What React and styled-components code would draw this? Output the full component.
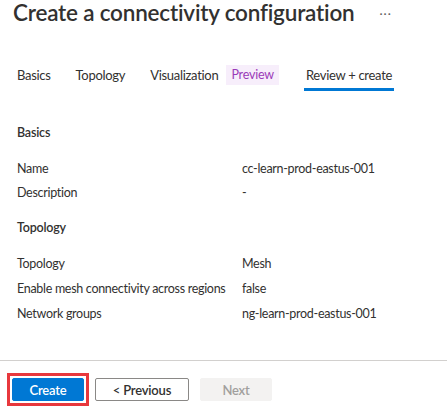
import React from "react";
import styled, { createGlobalStyle } from "styled-components";

const GlobalStyle = createGlobalStyle`
  body {
    margin: 0;
    background: #ffffff;
    font-family: "Segoe UI", Lato, sans-serif;
    color: #323130;
  }
`;

const basics = [
  { label: "Name", value: "cc-learn-prod-eastus-001" },
  { label: "Description", value: "-" },
];

const topology = [
  { label: "Topology", value: "Mesh" },
  { label: "Enable mesh connectivity across regions", value: "false" },
  { label: "Network groups", value: "ng-learn-prod-eastus-001" },
];

const tabs = [
  { name: "Basics" },
  { name: "Topology" },
  { name: "Visualization", badge: "Preview" },
  { name: "Review + create", active: true },
];

export default function App() {
  return (
    <Page>
      <GlobalStyle />
      <Header>
        <Title>Create a connectivity configuration</Title>
        <More>···</More>
      </Header>
      <TabBar>
        {tabs.map((t) => (
          <Tab key={t.name} $active={t.active}>
            {t.name}
            {t.badge && <Badge>{t.badge}</Badge>}
          </Tab>
        ))}
      </TabBar>
      <Content>
        <SectionTitle>Basics</SectionTitle>
        <Rows>
          {basics.map((r) => (
            <Row key={r.label}>
              <Label>{r.label}</Label>
              <Value>{r.value}</Value>
            </Row>
          ))}
        </Rows>
        <SectionTitle>Topology</SectionTitle>
        <Rows>
          {topology.map((r) => (
            <Row key={r.label} $tall>
              <Label>{r.label}</Label>
              <Value>{r.value}</Value>
            </Row>
          ))}
        </Rows>
      </Content>
      <Footer>
        <Highlight>
          <PrimaryButton>Create</PrimaryButton>
        </Highlight>
        <SecondaryButton>&lt; Previous</SecondaryButton>
        <DisabledButton>Next</DisabledButton>
      </Footer>
    </Page>
  );
}

const Page = styled.div`
  width: 447px;
  height: 418px;
  overflow: hidden;
  display: flex;
  flex-direction: column;
`;

const Header = styled.div`
  display: flex;
  align-items: center;
  padding-left: 13px;
  height: 26px;
`;

const Title = styled.h1`
  margin: 0;
  font-size: 22.5px;
  font-weight: 600;
  letter-spacing: -0.2px;
  line-height: 26px;
  color: #323130;
  white-space: nowrap;
`;

const More = styled.span`
  margin-left: 25px;
  font-size: 12px;
  color: #605e5c;
  letter-spacing: 1px;
`;

const TabBar = styled.div`
  display: flex;
  align-items: stretch;
  gap: 25px;
  margin-top: 37px;
  padding-left: 17px;
  height: 28px;
`;

const Tab = styled.div`
  display: flex;
  align-items: center;
  padding-bottom: 4px;
  font-size: 13px;
  letter-spacing: -0.3px;
  color: #323130;
  white-space: nowrap;
  position: relative;
  margin: 0 ${(p) => (p.$active ? "2px" : "0")};
  &::after {
    content: "";
    position: absolute;
    left: -2px;
    right: -2px;
    bottom: 0;
    height: 3px;
    background: ${(p) => (p.$active ? "#0078d4" : "transparent")};
  }
`;

const Badge = styled.span`
  margin-left: 8px;
  padding: 2px 5px 3px;
  background: #f7eefb;
  color: #9b3bb8;
  font-size: 12.5px;
  letter-spacing: -0.2px;
`;

const Content = styled.div`
  padding: 32px 0 0 17px;
  display: flex;
  flex-direction: column;
  flex: 1;
`;

const SectionTitle = styled.div`
  font-size: 12.5px;
  font-weight: 600;
  letter-spacing: -0.2px;
  line-height: 20px;
  height: 20px;
`;

const Rows = styled.div`
  display: flex;
  flex-direction: column;
  padding: 13px 0 14px;
`;

const Row = styled.div`
  display: flex;
  height: ${(p) => (p.$tall ? "25px" : "24px")};
  align-items: center;
  font-size: 12.5px;
  letter-spacing: -0.3px;
  white-space: nowrap;
`;

const Label = styled.div`
  width: 225px;
  flex-shrink: 0;
  color: #323130;
`;

const Value = styled.div`
  color: #323130;
`;

const Footer = styled.div`
  border-top: 1px solid #d2d0ce;
  height: 58px;
  display: flex;
  align-items: center;
  gap: 6px;
  padding-left: 7px;
  box-sizing: border-box;
`;

const Highlight = styled.div`
  border: 3px solid #e8383d;
  padding: 2px;
  display: flex;
`;

const ButtonBase = styled.button`
  height: 23px;
  width: 72px;
  font-family: "Segoe UI", Lato, sans-serif;
  font-size: 13px;
  font-weight: 600;
  letter-spacing: -0.2px;
  border-radius: 2px;
  padding: 0;
  display: flex;
  align-items: center;
  justify-content: center;
`;

const PrimaryButton = styled(ButtonBase)`
  background: #0078d4;
  border: 1px solid #0078d4;
  color: #ffffff;
`;

const SecondaryButton = styled(ButtonBase)`
  width: 94px;
  background: #ffffff;
  border: 1px solid #8a8886;
  color: #323130;
`;

const DisabledButton = styled(ButtonBase)`
  margin-left: 5px;
  background: #f3f2f1;
  border: 1px solid #f3f2f1;
  color: #a19f9d;
`;
